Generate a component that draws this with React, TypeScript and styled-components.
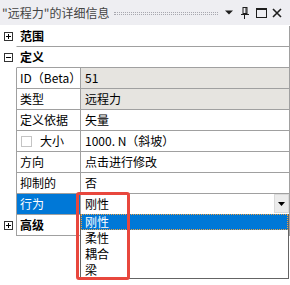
import React from "react";
import styled, { createGlobalStyle } from "styled-components";

const Global = createGlobalStyle`
  html, body { margin: 0; padding: 0; background: #fff; }
  * { box-sizing: border-box; }
`;

const LINE = "#a0a0a0";
const BLUE = "#0078d7";

const Panel = styled.div`
  position: relative;
  width: 290px;
  height: 285px;
  overflow: hidden;
  background: #fff;
  font-family: "Noto Sans CJK SC", "Microsoft YaHei", sans-serif;
  font-size: 12px;
  color: #000;
`;

const TitleBar = styled.div`
  display: flex;
  align-items: center;
  height: 25px;
  padding: 0 5px 0 2px;
  background: #eeeef2;
  margin-bottom: 1px;
`;

const Title = styled.span`
  color: #444;
  white-space: nowrap;
  line-height: 25px;
`;

const Grip = styled.div`
  flex: 1;
  height: 3px;
  margin: 1px 3px 0 5px;
  border-top: 1px dotted #a8a8b0;
  border-bottom: 1px dotted #a8a8b0;
`;

const IconSlot = styled.span`
  width: 16px;
  height: 25px;
  display: flex;
  align-items: center;
  justify-content: center;
  color: #1e1e1e;
`;

const Body = styled.div`
  display: flex;
  flex-direction: column;
`;

const Row = styled.div`
  display: flex;
  height: 21px;
`;

const Gutter = styled.div`
  width: 16px;
  flex: none;
  display: flex;
  align-items: center;
  justify-content: center;
  padding-left: 1px;
`;

const Main = styled.div<{ $edge?: boolean }>`
  flex: 1;
  display: flex;
  border-bottom: 1px solid ${LINE};
  border-right: 1px solid ${LINE};
  border-left: 1px solid ${(p) => (p.$edge ? LINE : "transparent")};
`;

const CategoryLabel = styled.div`
  padding-left: 3px;
  font-weight: bold;
  line-height: 20px;
`;

const NameCell = styled.div<{ $selected?: boolean }>`
  width: 64px;
  flex: none;
  display: flex;
  align-items: center;
  gap: 8px;
  padding-left: ${(p) => (p.$selected ? "3px" : "3px")};
  border-right: 1px solid ${LINE};
  line-height: 20px;
  white-space: nowrap;
  background: ${(p) => (p.$selected ? BLUE : "transparent")};
  color: ${(p) => (p.$selected ? "#fff" : "#000")};
`;

const ValueCell = styled.div<{ $readonly?: boolean }>`
  position: relative;
  flex: 1;
  display: flex;
  align-items: center;
  padding-left: 4px;
  line-height: 20px;
  white-space: nowrap;
  background: ${(p) => (p.$readonly ? "#e6e4e0" : "#fff")};
`;

const CheckBox = styled.span`
  width: 11px;
  height: 11px;
  margin-left: 1px;
  border: 1px solid #c4c4c4;
  background: #fff;
  flex: none;
`;

const DropButton = styled.span`
  margin-left: auto;
  align-self: flex-start;
  width: 15px;
  height: 19px;
  display: flex;
  align-items: center;
  justify-content: center;
  background: #ececec;
  border: 1px solid #dadada;
`;

const DropList = styled.div`
  position: absolute;
  top: 100%;
  left: -1px;
  right: 0;
  display: flex;
  flex-direction: column;
  background: #fff;
  border: 1px solid #646464;
  border-top: none;
  z-index: 2;
`;

const DropItem = styled.div<{ $active?: boolean }>`
  height: 16px;
  line-height: 14px;
  padding-left: 3px;
  border: 1px ${(p) => (p.$active ? "dotted #f0a040" : "solid transparent")};
  background: ${(p) => (p.$active ? BLUE : "#fff")};
  color: ${(p) => (p.$active ? "#fff" : "#000")};
`;

const Callout = styled.div`
  position: absolute;
  left: 76px;
  top: 192px;
  width: 54px;
  height: 88px;
  border: 3px solid #e8473d;
  border-radius: 3px;
  z-index: 3;
  pointer-events: none;
`;

const Expander = ({ open }: { open?: boolean }) => (
  <svg width="9" height="9" viewBox="0 0 9 9">
    <rect x="0.5" y="0.5" width="8" height="8" fill="#fff" stroke="#333" />
    <line x1="2" y1="4.5" x2="7" y2="4.5" stroke="#000" />
    {!open && <line x1="4.5" y1="2" x2="4.5" y2="7" stroke="#000" />}
  </svg>
);

const Category = ({ label, open, edge }: { label: string; open?: boolean; edge?: boolean }) => (
  <Row>
    <Gutter>
      <Expander open={open} />
    </Gutter>
    <Main $edge={edge}>
      <CategoryLabel>{label}</CategoryLabel>
    </Main>
  </Row>
);

const Prop = ({
  name,
  value,
  readonly,
  children,
  nameExtra,
  selected,
}: {
  name: string;
  value?: string;
  readonly?: boolean;
  children?: React.ReactNode;
  nameExtra?: React.ReactNode;
  selected?: boolean;
}) => (
  <Row>
    <Gutter />
    <Main $edge>
      <NameCell $selected={selected}>
        {nameExtra}
        {name}
      </NameCell>
      <ValueCell $readonly={readonly}>
        {value}
        {children}
      </ValueCell>
    </Main>
  </Row>
);

export default function App() {
  return (
    <>
      <Global />
      <Panel>
        <TitleBar>
          <Title>"远程力"的详细信息</Title>
          <Grip />
          <IconSlot>
            <svg width="8" height="5" viewBox="0 0 8 5">
              <path d="M0 0.5 H8 L4 4.5 Z" fill="#1e1e1e" />
            </svg>
          </IconSlot>
          <IconSlot>
            <svg width="8" height="12" viewBox="0 0 8 12">
              <rect x="2" y="0.5" width="4" height="6" fill="none" stroke="#1e1e1e" />
              <line x1="5" y1="1" x2="5" y2="6.5" stroke="#1e1e1e" />
              <line x1="0" y1="7.5" x2="8" y2="7.5" stroke="#1e1e1e" />
              <line x1="3.5" y1="8" x2="3.5" y2="12" stroke="#1e1e1e" />
            </svg>
          </IconSlot>
          <IconSlot>
            <svg width="11" height="10" viewBox="0 0 11 10">
              <rect x="0.5" y="1" width="10" height="8.5" fill="none" stroke="#1e1e1e" />
              <line x1="0" y1="1" x2="11" y2="1" stroke="#1e1e1e" strokeWidth="2" />
            </svg>
          </IconSlot>
          <IconSlot>
            <svg width="10" height="10" viewBox="0 0 10 10">
              <path d="M1 1 L9 9 M9 1 L1 9" stroke="#1e1e1e" strokeWidth="1.6" />
            </svg>
          </IconSlot>
        </TitleBar>
        <Body>
          <Category label="范围" />
          <Category label="定义" open />
          <Prop name="ID（Beta）" value="51" readonly />
          <Prop name="类型" value="远程力" readonly />
          <Prop name="定义依据" value="矢量" />
          <Prop name="大小" value="1000. N（斜坡）" nameExtra={<CheckBox />} />
          <Prop name="方向" value="点击进行修改" />
          <Prop name="抑制的" value="否" />
          <Prop name="行为" value="刚性" selected>
            <DropButton>
              <svg width="7" height="4" viewBox="0 0 7 4">
                <path d="M0 0 H7 L3.5 4 Z" fill="#000" />
              </svg>
            </DropButton>
            <DropList>
              <DropItem $active>刚性</DropItem>
              <DropItem>柔性</DropItem>
              <DropItem>耦合</DropItem>
              <DropItem>梁</DropItem>
            </DropList>
          </Prop>
          <Category label="高级" edge />
        </Body>
        <Callout />
      </Panel>
    </>
  );
}
